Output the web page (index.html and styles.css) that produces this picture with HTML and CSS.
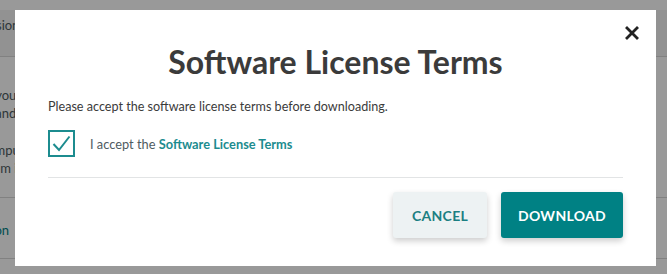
FILE: index.html
```html
<!DOCTYPE html>
<html lang="en">
<head>
    <meta charset="UTF-8">
    <meta name="viewport" content="width=device-width, initial-scale=1.0">
    <title>Software License Terms</title>
    <link rel="stylesheet" href="styles.css">
</head>
<body>
    <div class="page">
        <div class="page-head">Firmware Version</div>
        <div class="page-block">
            <p>Confirm that your board</p>
            <p>is connected and protected.</p>
            <p class="gap">Keep your computer on</p>
            <p>until the system is ready.</p>
        </div>
        <div class="page-block page-link">Documentation</div>
    </div>

    <div class="overlay"></div>

    <div class="modal">
        <button class="close" aria-label="Close">
            <svg width="14" height="14" viewBox="0 0 14 14">
                <path d="M2 2 L12 12 M12 2 L2 12" stroke="#222" stroke-width="2.8" stroke-linecap="square"/>
            </svg>
        </button>
        <h1>Software License Terms</h1>
        <p class="intro">Please accept the software license terms before downloading.</p>
        <label class="accept">
            <span class="checkbox">
                <svg width="19" height="17" viewBox="0 0 19 17">
                    <path d="M1.5 9 L7 15 L17.5 1.5" fill="none" stroke="#1c8c8f" stroke-width="2"/>
                </svg>
            </span>
            <span>I accept the <a href="#">Software License Terms</a></span>
        </label>
        <div class="actions">
            <button class="btn btn-cancel">CANCEL</button>
            <button class="btn btn-download">DOWNLOAD</button>
        </div>
    </div>
</body>
</html>
```
FILE: styles.css
```css
body {
    margin: 0;
    font-family: Lato, "Open Sans", sans-serif;
    background-color: #fff;
    color: #4e5b61;
    height: 274px;
    overflow: hidden;
}
.page {
    margin-left: -80px;
    padding-top: 10px;
    font-size: 13px;
}
.page-head {
    height: 46px;
    line-height: 30px;
    background: #f4f4f4;
    border-bottom: 1px solid #d8d8d8;
}
.page-block {
    padding: 29px 0 20px;
    border-bottom: 1px solid #d8d8d8;
}
.page-block p {
    margin: 0;
    line-height: 18px;
}
.page-block .gap {
    margin-top: 19px;
}
.page-link {
    color: #008184;
    padding: 24px 0 0;
    height: 36px;
}
.overlay {
    position: fixed;
    inset: 0;
    background: rgba(0, 0, 0, 0.4);
}
.modal {
    position: fixed;
    left: 15px;
    top: 10px;
    width: 641px;
    height: 256px;
    box-sizing: border-box;
    padding: 0 33px;
    background: #fff;
}
.close {
    position: absolute;
    top: 16px;
    right: 17px;
    padding: 0;
    border: none;
    background: none;
    line-height: 0;
}
h1 {
    margin: 34px 0 0;
    font-size: 32px;
    line-height: 36px;
    font-weight: 700;
    color: #3b3b3b;
    text-align: center;
}
.intro {
    margin: 18px 0 0;
    font-size: 12.6px;
    line-height: 18px;
    color: #3b3b3b;
}
.accept {
    display: flex;
    align-items: center;
    gap: 15px;
    margin-top: 14px;
    padding-bottom: 20px;
    border-bottom: 1px solid #e2e4e5;
    font-size: 12.8px;
    color: #4e5b61;
}
.checkbox {
    width: 23px;
    height: 23px;
    border: 2px solid #1c8c8f;
    display: flex;
    align-items: center;
    justify-content: center;
}
.accept a {
    color: #1c8c8f;
    font-weight: 700;
    text-decoration: none;
}
.actions {
    display: flex;
    justify-content: flex-end;
    gap: 14px;
    margin-top: 14px;
}
.btn {
    height: 46px;
    border: none;
    border-radius: 3px;
    font-family: Lato, sans-serif;
    font-size: 14px;
    font-weight: 700;
    letter-spacing: 0.3px;
    box-shadow: 0 3px 6px rgba(0, 0, 0, 0.2);
}
.btn-cancel {
    width: 94px;
    background: #edf2f3;
    color: #1b7f82;
}
.btn-download {
    width: 122px;
    background: #008184;
    color: #fff;
}
```
